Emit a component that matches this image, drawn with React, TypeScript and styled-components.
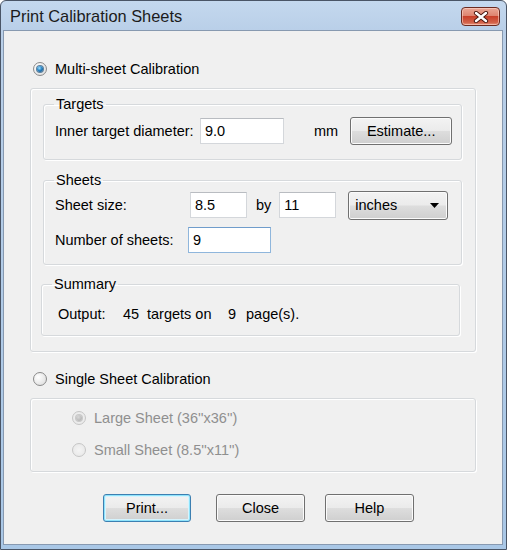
import React from "react";
import styled, { createGlobalStyle, css } from "styled-components";

const Global = createGlobalStyle`
  html, body { margin: 0; padding: 0; background: #ffffff; }
  body { font-family: "Liberation Sans", Arial, sans-serif; }
`;

const FONT = `"Liberation Sans", Arial, sans-serif`;

const Window = styled.div`
  width: 507px;
  height: 550px;
  box-sizing: border-box;
  border: 1px solid #4a5566;
  border-radius: 6px 6px 0 0;
  background: linear-gradient(to bottom, #c4d8ee 0px, #b9cfe8 30px, #a9c7e6 100%);
  display: flex;
  flex-direction: column;
  padding: 0 3px 4px 2px;
  overflow: hidden;
`;

const TitleBar = styled.div`
  height: 29px;
  display: flex;
  align-items: center;
  justify-content: space-between;
  padding: 0 3px 0 7px;
`;

const Title = styled.span`
  font-family: ${FONT};
  font-size: 16.4px;
  color: #1b1b1b;
  padding-top: 1px;
`;

const CloseBtn = styled.div`
  width: 39px;
  height: 19px;
  box-sizing: border-box;
  border: 1px solid #6b2a20;
  border-radius: 4px;
  background: linear-gradient(to bottom, #eba795 0%, #de8470 45%, #c9402a 50%, #d2624a 85%, #e8927a 100%);
  box-shadow: inset 0 0 0 1px rgba(255, 220, 210, 0.55);
  display: flex;
  align-items: center;
  justify-content: center;
  margin-top: 2px;
`;

const Content = styled.div`
  flex: 1;
  background: #f0f0f0;
  border: 1px solid #8799b0;
  padding: 30px 0 0 26px;
  display: flex;
  flex-direction: column;
`;

const RadioRow = styled.label<{ $indent?: number; $mt?: number; $disabled?: boolean }>`
  display: flex;
  align-items: center;
  gap: 8px;
  height: 16px;
  margin-left: ${(p) => p.$indent ?? 0}px;
  margin-top: ${(p) => p.$mt ?? 0}px;
  font-family: ${FONT};
  font-size: 14.5px;
  color: ${(p) => (p.$disabled ? "#8f8f8f" : "#000")};
`;

const RadioCircle = styled.span<{ $disabled?: boolean }>`
  width: 14px;
  height: 14px;
  box-sizing: border-box;
  border-radius: 50%;
  border: 1px solid ${(p) => (p.$disabled ? "#c6c6c6" : "#8a8a8a")};
  background: ${(p) =>
    p.$disabled
      ? "radial-gradient(circle at 50% 50%, #f4f4f4 0%, #e6e6e6 100%)"
      : "radial-gradient(circle at 35% 35%, #ffffff 0%, #e4e4e4 70%, #cfcfcf 100%)"};
  display: flex;
  align-items: center;
  justify-content: center;
  flex: none;
`;

const RadioDot = styled.span<{ $disabled?: boolean }>`
  width: 6px;
  height: 6px;
  border-radius: 50%;
  background: ${(p) =>
    p.$disabled
      ? "radial-gradient(circle at 40% 35%, #d8d8d8 0%, #a8a8a8 100%)"
      : "radial-gradient(circle at 40% 35%, #9ee0ff 0%, #2a84c4 45%, #0c3f6e 100%)"};
  box-shadow: 0 0 0 1px ${(p) => (p.$disabled ? "#c8c8c8" : "#5b7f9c")};
`;

const Radio: React.FC<{ checked?: boolean; disabled?: boolean; label: string; indent?: number; mt?: number }> = ({
  checked,
  disabled,
  label,
  indent,
  mt,
}) => (
  <RadioRow $indent={indent} $mt={mt} $disabled={disabled}>
    <RadioCircle $disabled={disabled}>{checked && <RadioDot $disabled={disabled} />}</RadioCircle>
    <span>{label}</span>
  </RadioRow>
);

const GroupBox = styled.div<{ $mt: number; $pad: string }>`
  width: 446px;
  box-sizing: border-box;
  margin-top: ${(p) => p.$mt}px;
  padding: ${(p) => p.$pad};
  border: 1px solid #d6d9dc;
  border-radius: 3px;
  box-shadow: inset 1px 1px 0 #ffffff, 1px 1px 0 #ffffff;
  display: flex;
  flex-direction: column;
`;

const Group = styled.fieldset<{ $mt?: number; $pad: string; $shift?: number }>`
  margin: ${(p) => p.$mt ?? 0}px 0 0 ${(p) => p.$shift ?? 0}px;
  width: 419px;
  box-sizing: border-box;
  min-width: 0;
  padding: ${(p) => p.$pad};
  border: 1px solid #d6d9dc;
  border-radius: 3px;
  box-shadow: inset 1px 1px 0 #ffffff, 1px 1px 0 #ffffff;
`;

const Legend = styled.legend<{ $ml?: number }>`
  padding: 0 2px;
  margin-left: ${(p) => p.$ml ?? -1}px;
  font-family: ${FONT};
  font-size: 14.5px;
  line-height: 16px;
  color: #000;
`;

const Row = styled.div<{ $mt?: number }>`
  display: flex;
  align-items: center;
  height: 28px;
  margin-top: ${(p) => p.$mt ?? 0}px;
  font-family: ${FONT};
  font-size: 14.5px;
  color: #000;
`;

const Label = styled.span<{ $w: number }>`
  width: ${(p) => p.$w}px;
  flex: none;
  white-space: nowrap;
`;

const TextBox = styled.div<{ $w: number; $focused?: boolean; $ml?: number }>`
  width: ${(p) => p.$w}px;
  height: 26px;
  box-sizing: border-box;
  margin-left: ${(p) => p.$ml ?? 0}px;
  background: #ffffff;
  border: 1px solid ${(p) => (p.$focused ? "#8fb6dc" : "#d4d7db")};
  border-top-color: ${(p) => (p.$focused ? "#6f9ccb" : "#b9bcc1")};
  padding: 0 4px;
  display: flex;
  align-items: center;
  font-family: ${FONT};
  font-size: 14.5px;
  color: #000;
  flex: none;
`;

const buttonFace = css`
  box-sizing: border-box;
  border: 1px solid #707070;
  border-radius: 3px;
  background: linear-gradient(to bottom, #f3f3f3 0%, #ebebeb 48%, #dddddd 52%, #cfcfcf 100%);
  box-shadow: inset 0 0 0 1px #fbfbfb;
  font-family: ${FONT};
  font-size: 14.5px;
  color: #000;
`;

const Button = styled.div<{ $w: number; $ml?: number; $default?: boolean }>`
  ${buttonFace};
  width: ${(p) => p.$w}px;
  height: 28px;
  margin-left: ${(p) => p.$ml ?? 0}px;
  display: flex;
  align-items: center;
  justify-content: center;
  flex: none;
  ${(p) =>
    p.$default &&
    css`
      border-color: #3c7fb1;
      box-shadow: inset 0 0 0 1px #8ee3fb, inset 0 0 0 2px #d6f3fd;
    `}
`;

const Select = styled.div<{ $ml: number }>`
  ${buttonFace};
  width: 100px;
  height: 29px;
  margin-left: ${(p) => p.$ml}px;
  display: flex;
  align-items: center;
  justify-content: space-between;
  padding: 0 8px 0 6px;
  flex: none;
`;

const Unit = styled.span<{ $ml: number }>`
  margin-left: ${(p) => p.$ml}px;
  flex: none;
`;

const SummaryRow = styled.div`
  display: flex;
  align-items: center;
  height: 16px;
  font-family: ${FONT};
  font-size: 14.5px;
  color: #000;
`;

const Cell = styled.span<{ $w?: number }>`
  width: ${(p) => (p.$w ? `${p.$w}px` : "auto")};
  flex: none;
  white-space: nowrap;
`;

const ButtonRow = styled.div`
  display: flex;
  margin-top: 22px;
  padding-left: 73px;
`;

export default function App() {
  return (
    <>
      <Global />
      <Window>
        <TitleBar>
          <Title>Print Calibration Sheets</Title>
          <CloseBtn>
            <svg width="16" height="12" viewBox="0 0 16 12">
              <path d="M3 2 L13 10 M13 2 L3 10" stroke="#4a1710" strokeWidth="4.2" strokeLinecap="round" />
              <path d="M3 2 L13 10 M13 2 L3 10" stroke="#ffffff" strokeWidth="2.4" strokeLinecap="round" />
            </svg>
          </CloseBtn>
        </TitleBar>
        <Content>
          <Radio checked label="Multi-sheet Calibration" indent={3} />
          <GroupBox $mt={11} $pad="7px 13px 15px 12px">
            <Group $pad="5px 10px 14px 11px">
              <Legend>Targets</Legend>
              <Row>
                <Label $w={145}>Inner target diameter:</Label>
                <TextBox $w={84}>9.0</TextBox>
                <Unit $ml={30}>mm</Unit>
                <Button $w={102} $ml={12}>
                  Estimate...
                </Button>
              </Row>
            </Group>
            <Group $mt={12} $pad="3px 10px 10px 11px">
              <Legend>Sheets</Legend>
              <Row>
                <Label $w={135}>Sheet size:</Label>
                <TextBox $w={57}>8.5</TextBox>
                <Unit $ml={9}>by</Unit>
                <TextBox $w={57} $ml={8}>
                  11
                </TextBox>
                <Select $ml={12}>
                  <span>inches</span>
                  <svg width="9" height="5" viewBox="0 0 9 5">
                    <path d="M0 0 H9 L4.5 5 Z" fill="#000" />
                  </svg>
                </Select>
              </Row>
              <Row $mt={7}>
                <Label $w={133}>Number of sheets:</Label>
                <TextBox $w={83} $focused>
                  9
                </TextBox>
              </Row>
            </Group>
            <Group $mt={11} $pad="14px 10px 13px 16px" $shift={-2}>
              <Legend $ml={-6}>Summary</Legend>
              <SummaryRow>
                <Cell $w={65}>Output:</Cell>
                <Cell $w={24}>45</Cell>
                <Cell $w={81}>targets on</Cell>
                <Cell $w={18}>9</Cell>
                <Cell>page(s).</Cell>
              </SummaryRow>
            </Group>
          </GroupBox>
          <Radio label="Single Sheet Calibration" indent={3} mt={19} />
          <GroupBox $mt={11} $pad="11px 10px 13px 41px">
            <Radio checked disabled label={"Large Sheet (36''x36'')"} />
            <Radio disabled label={"Small Sheet (8.5''x11'')"} mt={16} />
          </GroupBox>
          <ButtonRow>
            <Button $w={88} $default>
              Print...
            </Button>
            <Button $w={89} $ml={25}>
              Close
            </Button>
            <Button $w={89} $ml={20}>
              Help
            </Button>
          </ButtonRow>
        </Content>
      </Window>
    </>
  );
}
